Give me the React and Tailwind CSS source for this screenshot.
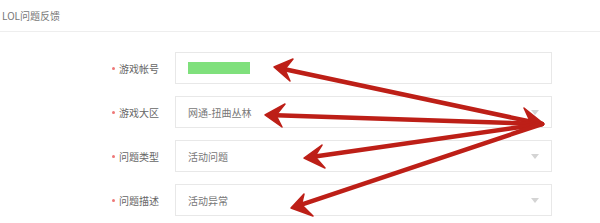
const FIELDS = [
  { label: '游戏帐号', kind: 'account' },
  { label: '游戏大区', value: '网通-扭曲丛林', select: true },
  { label: '问题类型', value: '活动问题', select: true },
  { label: '问题描述', value: '活动异常', select: true },
]

const ARROWS = [
  { tip: [274, 67], b1: [293, 59], b2: [290, 81] },
  { tip: [265, 115], b1: [285, 104], b2: [282, 127] },
  { tip: [304, 158], b1: [322, 145], b2: [325, 168] },
  { tip: [291, 208], b1: [304, 194], b2: [313, 216] },
]

const SRC = [542, 124]

function notch(tip) {
  const dx = SRC[0] - tip[0]
  const dy = SRC[1] - tip[1]
  const len = Math.hypot(dx, dy)
  return [tip[0] + (dx / len) * 11, tip[1] + (dy / len) * 11]
}

function Caret() {
  return (
    <svg width="8" height="5" viewBox="0 0 8 5" className="shrink-0">
      <path d="M0 0 L8 0 L4 5 Z" fill="#d4d4d4" />
    </svg>
  )
}

function Row({ field }) {
  return (
    <div className="flex h-8 items-center">
      <div className="flex w-[175px] items-center justify-end pr-[16px] text-[10px] text-[#666]">
        <span className="mr-[4px] inline-block h-[3px] w-[3px] rounded-full bg-[#ee7777]" />
        {field.label}
      </div>
      <div className="flex h-full w-[377px] items-center justify-between border border-[#e8e8e8] bg-white pl-[12px] pr-[12px]">
        {field.kind === 'account' ? (
          <div className="h-[12px] w-[62px] bg-[#7fe07c]" />
        ) : (
          <span className="text-[10px] text-[#777]">{field.value}</span>
        )}
        {field.select && <Caret />}
      </div>
    </div>
  )
}

export default function App() {
  return (
    <div
      className="relative h-[223px] w-[600px] overflow-hidden bg-white"
      style={{ fontFamily: '"Noto Sans CJK SC", "Liberation Sans", sans-serif' }}
    >
      <div className="flex h-[32px] items-center border-b border-[#eeeeee] pl-[2px] text-[10px] text-[#777]">
        LOL问题反馈
      </div>

      <div className="flex flex-col gap-3 pt-[20px]">
        {FIELDS.map((f) => (
          <Row key={f.label} field={f} />
        ))}
      </div>

      {/* red annotation arrows drawn over the form */}
      <svg className="pointer-events-none absolute inset-0" width="600" height="223" viewBox="0 0 600 223">
        {ARROWS.map((a, i) => {
          const n = notch(a.tip)
          return (
            <g key={i}>
              <line
                x1={SRC[0]}
                y1={SRC[1]}
                x2={n[0]}
                y2={n[1]}
                stroke="#bd1f17"
                strokeWidth="4.5"
                strokeLinecap="round"
              />
              <path
                d={`M${a.tip[0]} ${a.tip[1]} L${a.b1[0]} ${a.b1[1]} L${n[0]} ${n[1]} L${a.b2[0]} ${a.b2[1]} Z`}
                fill="#bd1f17"
                stroke="#bd1f17"
                strokeWidth="1.5"
                strokeLinejoin="round"
              />
            </g>
          )
        })}
        <path d="M524 108 L544 124 L530 121 Z" fill="#bd1f17" stroke="#bd1f17" strokeWidth="1.5" strokeLinejoin="round" />
      </svg>
    </div>
  )
}
